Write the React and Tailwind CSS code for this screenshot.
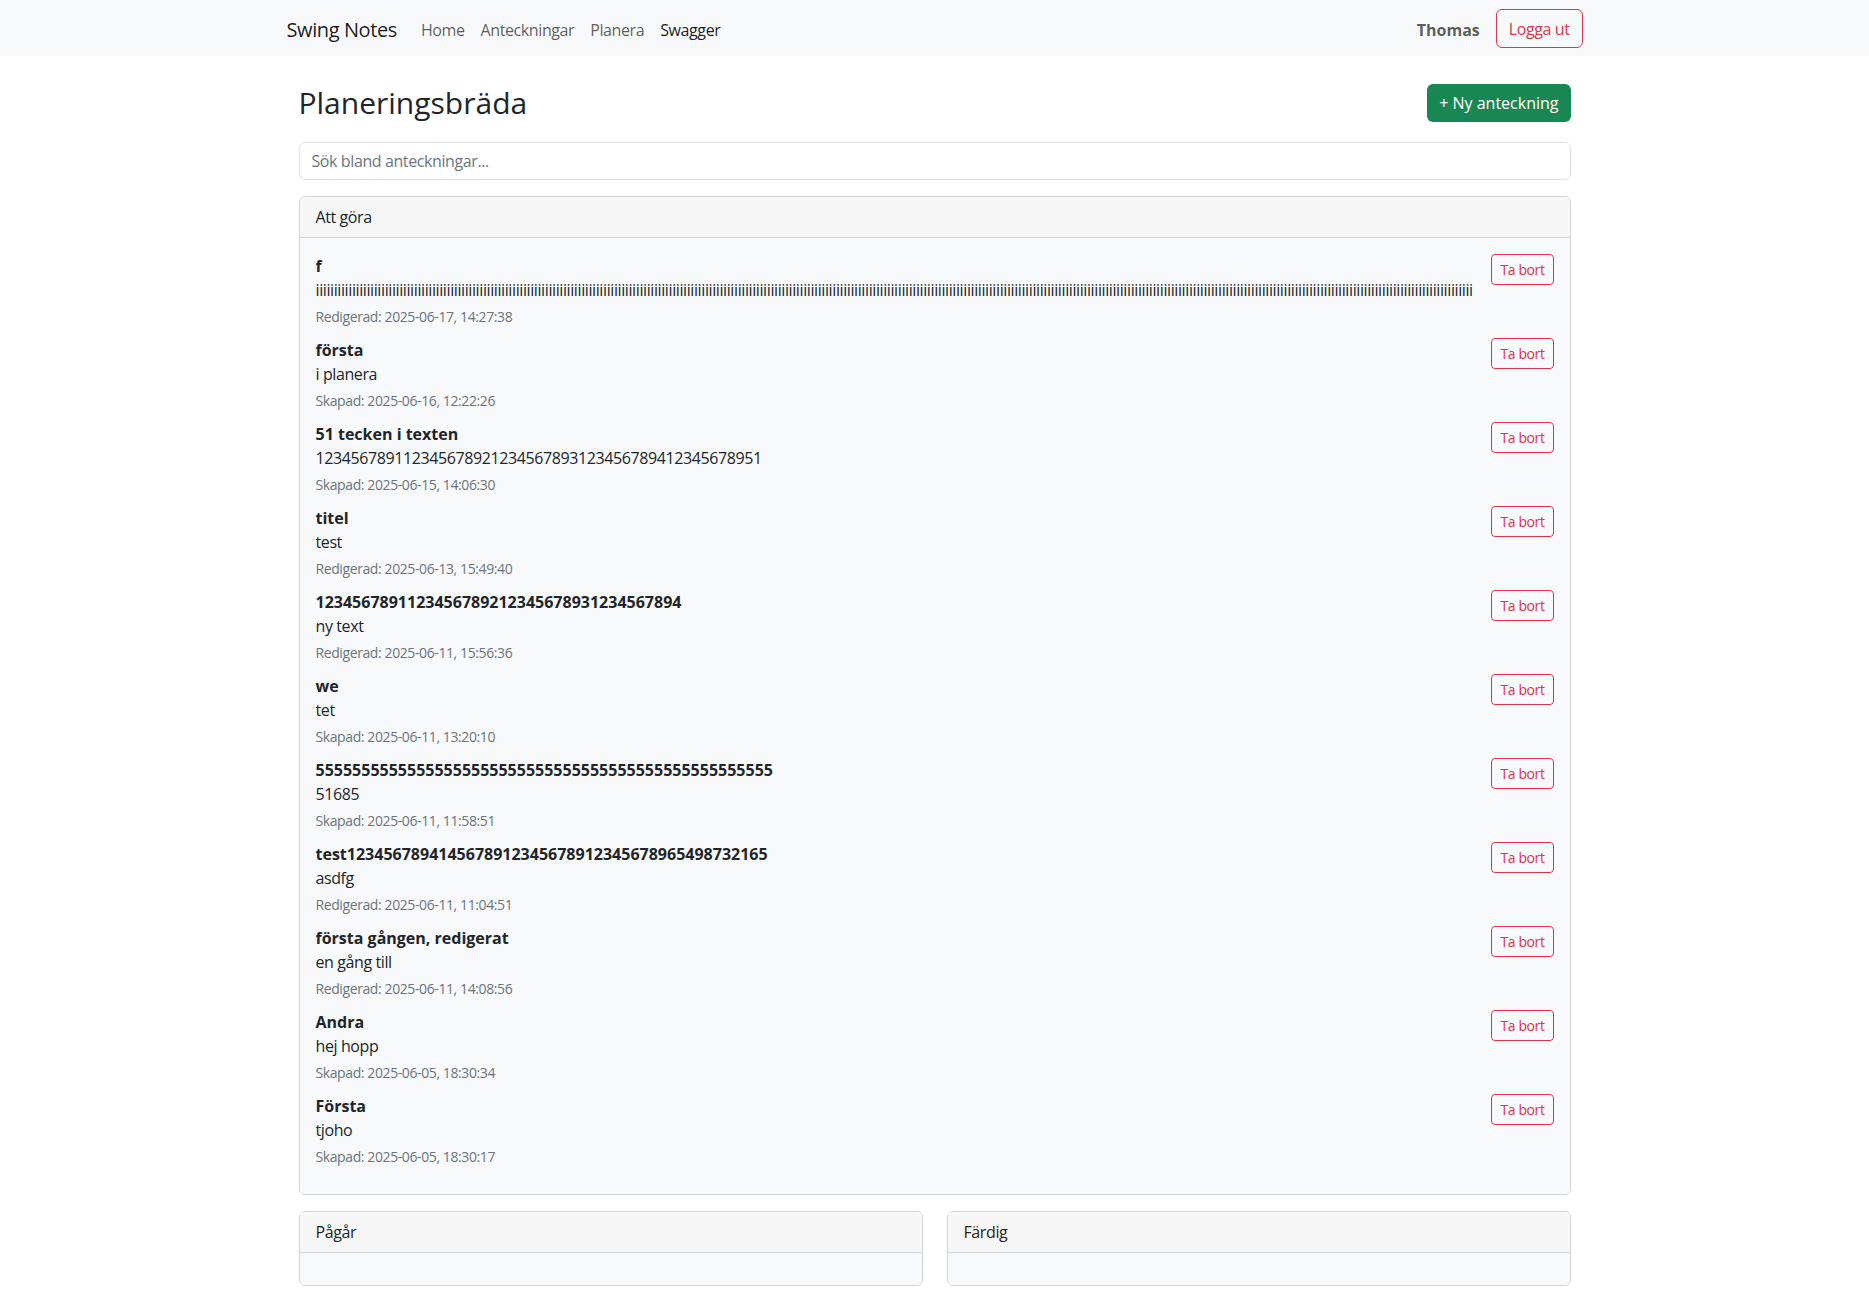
import React from "react";

const notes = [
  { title: "f", text: "i".repeat(318), date: "Redigerad: 2025-06-17, 14:27:38", clip: true },
  { title: "första", text: "i planera", date: "Skapad: 2025-06-16, 12:22:26" },
  { title: "51 tecken i texten", text: "123456789112345678921234567893123456789412345678951", date: "Skapad: 2025-06-15, 14:06:30" },
  { title: "titel", text: "test", date: "Redigerad: 2025-06-13, 15:49:40" },
  { title: "1234567891123456789212345678931234567894", text: "ny text", date: "Redigerad: 2025-06-11, 15:56:36" },
  { title: "we", text: "tet", date: "Skapad: 2025-06-11, 13:20:10" },
  { title: "5".repeat(50), text: "51685", date: "Skapad: 2025-06-11, 11:58:51" },
  { title: "test1234567894145678912345678912345678965498732165", text: "asdfg", date: "Redigerad: 2025-06-11, 11:04:51" },
  { title: "första gången, redigerat", text: "en gång till", date: "Redigerad: 2025-06-11, 14:08:56" },
  { title: "Andra", text: "hej hopp", date: "Skapad: 2025-06-05, 18:30:34" },
  { title: "Första", text: "tjoho", date: "Skapad: 2025-06-05, 18:30:17" },
];

const navLinks = ["Home", "Anteckningar", "Planera"];

function NoteRow({ note }) {
  return (
    <div className="mb-[11px] flex items-start justify-between">
      <div className="min-w-0 flex-1 pr-[14px]">
        <div className="text-base font-bold leading-6 tracking-normal">{note.title}</div>
        <div className={note.clip ? "overflow-hidden whitespace-nowrap leading-6" : "leading-6"}>
          {note.text}
        </div>
        <div className="mt-1 text-sm leading-[21px] text-[#6c757d]">{note.date}</div>
      </div>
      <button
        type="button"
        className="shrink-0 rounded border border-[#dc3545] px-2 py-1 text-sm leading-[21px] text-[#dc3545]"
      >
        Ta bort
      </button>
    </div>
  );
}

function Column({ title, children }) {
  return (
    <section className="overflow-hidden rounded-md border border-[#d3d4d5]">
      <div className="border-b border-[#d3d4d5] bg-[#f7f7f7] px-4 py-2 leading-6">{title}</div>
      <div className="bg-[#f8f9fa] p-4">{children}</div>
    </section>
  );
}

export default function App() {
  return (
    <div
      className="min-h-screen bg-white tracking-[-0.025em] text-[#212529]"
      style={{ fontFamily: '"Open Sans", "Noto Sans", sans-serif' }}
    >
      <nav className="h-14 bg-[#f8f9fa]">
        <div className="mx-auto flex h-full w-[1320px] items-center justify-between px-3">
          <div className="flex items-center pt-1">
            <span className="mr-4 text-[20px] leading-[30px] text-black/90">Swing Notes</span>
            <ul className="flex">
              {navLinks.map((link) => (
                <li key={link} className="px-2 text-base leading-6 text-black/65">
                  {link}
                </li>
              ))}
              <li className="px-2 text-base leading-6 text-black/90">Swagger</li>
            </ul>
          </div>
          <div className="flex items-center">
            <span className="mr-4 pt-1 font-bold tracking-normal text-black/65">Thomas</span>
            <button
              type="button"
              className="h-[39px] rounded-md border border-[#dc3545] px-3 pt-[2px] leading-6 text-[#dc3545]"
            >
              Logga ut
            </button>
          </div>
        </div>
      </nav>

      <main className="mx-auto w-[1320px] px-6 pt-7 pb-6">
        <div className="mb-5 flex h-[38px] items-center justify-between">
          <h2 className="text-[30px] font-medium leading-[1.2] tracking-normal">Planeringsbräda</h2>
          <button
            type="button"
            className="h-[38px] rounded-md bg-[#198754] px-3 leading-6 tracking-normal text-white"
          >
            + Ny anteckning
          </button>
        </div>

        <input
          type="text"
          placeholder="Sök bland anteckningar..."
          className="mb-4 block h-[38px] w-full rounded-md border border-[#dee2e6] px-3 text-base leading-6 placeholder:text-[#6c757d]"
        />

        <div className="mb-4">
          <Column title="Att göra">
            {notes.map((note, i) => (
              <NoteRow key={i} note={note} />
            ))}
          </Column>
        </div>

        <div className="grid grid-cols-2 gap-6">
          <Column title="Pågår" />
          <Column title="Färdig" />
        </div>
      </main>
    </div>
  );
}
